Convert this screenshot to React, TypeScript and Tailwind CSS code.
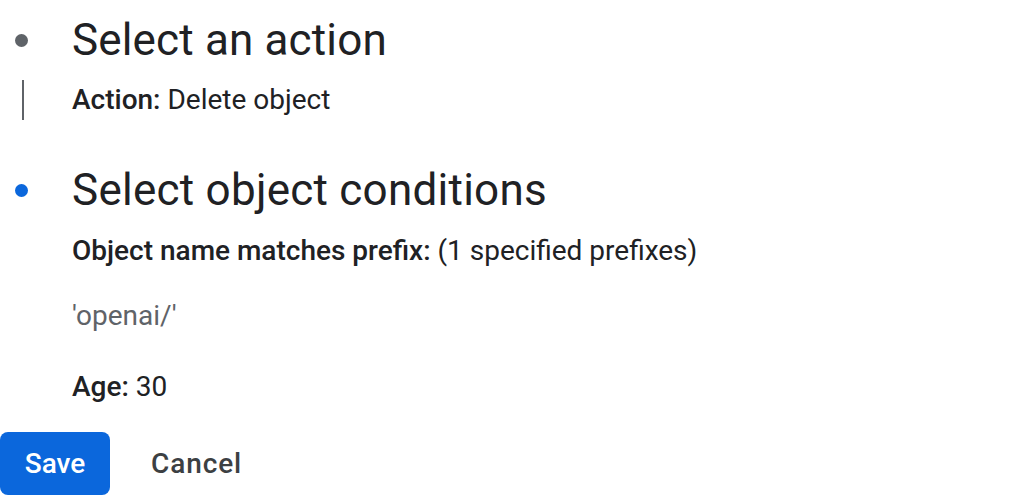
export default function App() {
  return (
    <div
      className="h-[496px] w-[1024px] overflow-hidden bg-white pt-[14px] text-[#202124]"
      style={{ fontFamily: "Roboto, 'Liberation Sans', sans-serif" }}
    >
      {/* step 1 */}
      <div className="flex h-[52px] items-center">
        <div className="w-[72px]">
          <span className="ml-[15px] block h-[13px] w-[13px] rounded-full bg-[#5f6368]" />
        </div>
        <h2 className="text-[44px] leading-[52px] font-normal tracking-[0.15px]">Select an action</h2>
      </div>
      <div className="mt-[14px] flex h-[40px]">
        <div className="w-[72px]">
          <span className="ml-[22px] block h-full w-[2px] bg-[#5f6368]" />
        </div>
        <p className="text-[28px] leading-[40px]">
          <span className="font-medium">Action:</span> Delete object
        </p>
      </div>

      {/* step 2 */}
      <div className="mt-[44px] flex h-[52px] items-center">
        <div className="w-[72px]">
          <span className="ml-[15px] block h-[13px] w-[13px] rounded-full bg-[#0b67dc]" />
        </div>
        <h2 className="text-[44px] leading-[52px] font-normal tracking-[0.25px]">Select object conditions</h2>
      </div>
      <div className="pl-[72px] text-[28px] leading-[32px]">
        <p className="mt-[19px]">
          <span className="font-medium">Object name matches prefix:</span> (1 specified prefixes)
        </p>
        <p className="mt-[33px] text-[#5f6368]">'openai/'</p>
        <p className="mt-[39px]">
          <span className="font-medium">Age:</span> 30
        </p>
      </div>

      <div className="mt-[29px] flex items-center">
        <button className="h-[63px] w-[110px] rounded-[8px] bg-[#0b67dc] text-[28px] font-medium text-white">
          Save
        </button>
        <button className="ml-[29px] h-[63px] px-[12px] text-[28px] font-medium tracking-[0.9px] text-[#3c4043]">
          Cancel
        </button>
      </div>
    </div>
  );
}
